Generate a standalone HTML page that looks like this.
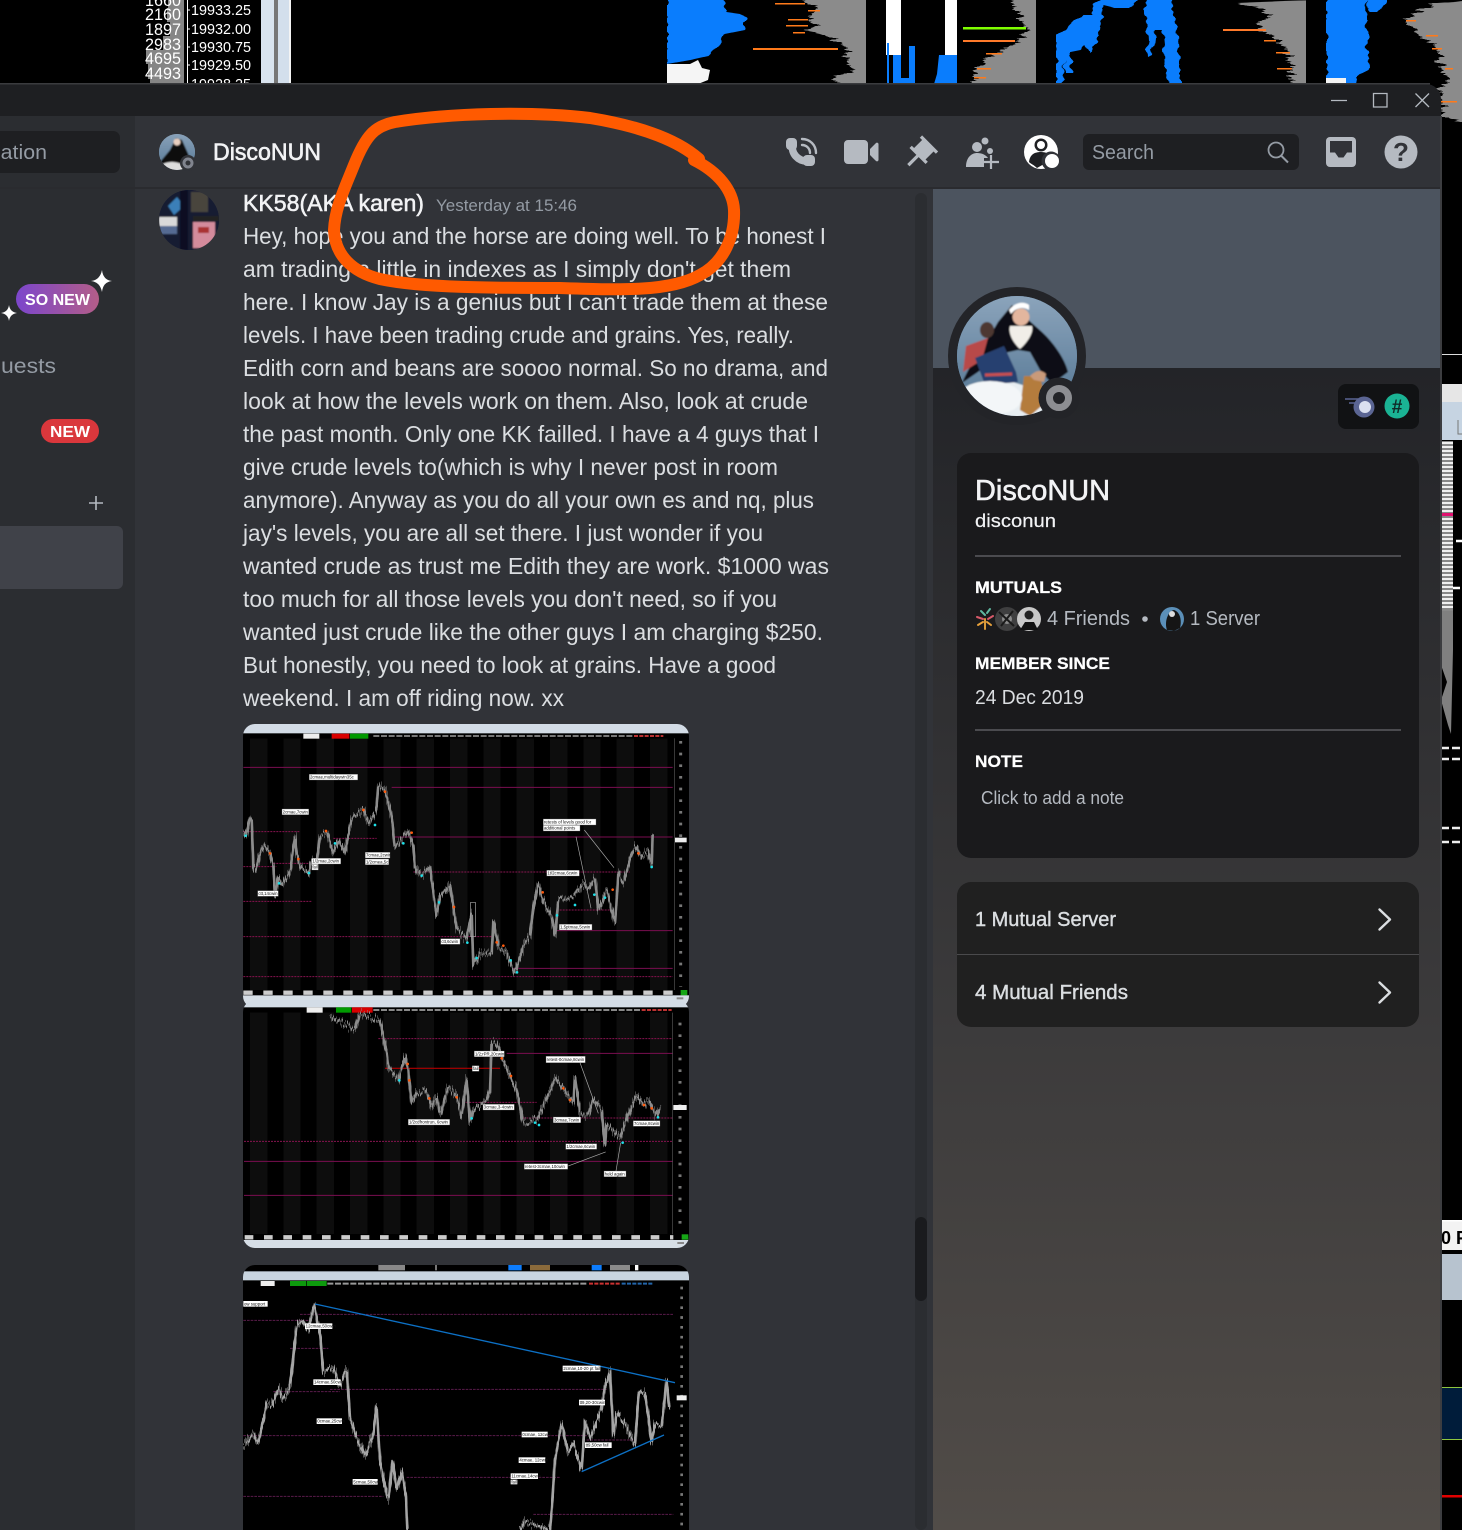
<!DOCTYPE html>
<html><head><meta charset="utf-8"><title>DiscoNUN</title>
<style>
html,body{margin:0;padding:0;background:#000;width:1462px;height:1530px;overflow:hidden}
svg{display:block}
text{font-family:"Liberation Sans",sans-serif}
.msg{font-size:23px;fill:#dbdee1}
.lb{font-size:13px;fill:#111}
.lr{fill:#fff}
.pr{fill:none;stroke:#8c8c8c;stroke-width:8;stroke-linejoin:bevel}
.hd{font-size:16.5px;font-weight:bold;fill:#fff;stroke:#fff;stroke-width:.25}
</style></head><body>
<svg xmlns="http://www.w3.org/2000/svg" width="1462" height="1530" viewBox="0 0 1462 1530">
<defs>
<linearGradient id="pg" x1="0" y1="368" x2="0" y2="1530" gradientUnits="userSpaceOnUse"><stop offset="0" stop-color="#232428"/><stop offset=".55" stop-color="#3b3a3b"/><stop offset="1" stop-color="#514c48"/></linearGradient>
<linearGradient id="sn" x1="0" x2="1" y1="0" y2="0"><stop offset="0" stop-color="#7c46cc"/><stop offset="1" stop-color="#b35d88"/></linearGradient>
<linearGradient id="sea" x1="0" x2="0" y1="0" y2="1"><stop offset="0" stop-color="#8ea6bd"/><stop offset="1" stop-color="#4f7290"/></linearGradient>
<clipPath id="c1"><circle cx="1017" cy="356" r="60"/></clipPath>
<clipPath id="c2"><circle cx="177" cy="152" r="18"/></clipPath>
<clipPath id="c3"><circle cx="189" cy="220" r="30"/></clipPath>
<clipPath id="ch1"><rect x="243" y="724" width="446" height="284" rx="12"/></clipPath>
<clipPath id="ch2"><rect x="243" y="1000" width="446" height="248" rx="12"/></clipPath>
<clipPath id="ch3"><rect x="243" y="1265" width="446" height="300" rx="12"/></clipPath>
<pattern id="bands" width="100" height="10" patternUnits="userSpaceOnUse"><rect width="100" height="10" fill="#000"/><rect x="30" width="52" height="10" fill="#0f0f0f"/></pattern>
<filter id="b" x="-2%" y="-2%" width="104%" height="104%"><feGaussianBlur stdDeviation=".8"/></filter>
<filter id="b2" x="-5%" y="-5%" width="110%" height="110%"><feGaussianBlur stdDeviation=".7"/></filter>
<filter id="j" filterUnits="userSpaceOnUse" x="0" y="0" width="1462" height="130" color-interpolation-filters="sRGB"><feTurbulence type="fractalNoise" baseFrequency=".01 .45" numOctaves="2" seed="4" result="n"/><feColorMatrix in="n" type="matrix" values="2 0 0 0 -.5  0 0 0 0 .5  0 0 0 0 .5  0 0 0 0 1" result="m"/><feDisplacementMap in="SourceGraphic" in2="m" scale="12" xChannelSelector="R" yChannelSelector="G"/></filter>
<filter id="j2" filterUnits="userSpaceOnUse" x="0" y="0" width="1462" height="130" color-interpolation-filters="sRGB"><feTurbulence type="fractalNoise" baseFrequency=".01 .2" numOctaves="1" seed="9" result="n"/><feColorMatrix in="n" type="matrix" values="2 0 0 0 -.5  0 0 0 0 .5  0 0 0 0 .5  0 0 0 0 1" result="m"/><feDisplacementMap in="SourceGraphic" in2="m" scale="5" xChannelSelector="R" yChannelSelector="G"/></filter>
<filter id="p" x="-3%" y="-8%" width="106%" height="116%" color-interpolation-filters="sRGB"><feTurbulence type="fractalNoise" baseFrequency=".35 .01" numOctaves="2" seed="7" result="n"/><feColorMatrix in="n" type="matrix" values="0 0 0 0 .5  0 2 0 0 -.5  0 0 0 0 .5  0 0 0 0 1" result="m"/><feDisplacementMap in="SourceGraphic" in2="m" scale="26" xChannelSelector="R" yChannelSelector="G"/></filter>
</defs>

<!-- background trading chart -->
<rect width="1462" height="1530" fill="#000"/>
<g fill="#858585"><rect x="168" y="0" width="16" height="8"/><rect x="167" y="8" width="17" height="14"/><rect x="170" y="22" width="14" height="14"/><rect x="163" y="36" width="21" height="14"/><rect x="146" y="50" width="38" height="14"/><rect x="148" y="64" width="36" height="15"/><rect x="150" y="79" width="34" height="6"/></g>
<rect x="187" y="0" width="1" height="84" fill="#fff"/>
<g stroke="#fff"><path d="M187 10h3M187 29h3M187 47h3M187 65h3"/></g>
<g font-size="17"><text x="145" y="20" textLength="36" lengthAdjust="spacingAndGlyphs" class="lr">2160</text><text x="145" y="35" textLength="36" lengthAdjust="spacingAndGlyphs" class="lr">1897</text><text x="145" y="50" textLength="36" lengthAdjust="spacingAndGlyphs" class="lr">2983</text><text x="145" y="64" textLength="36" lengthAdjust="spacingAndGlyphs" class="lr">4695</text><text x="145" y="79" textLength="36" lengthAdjust="spacingAndGlyphs" class="lr">4493</text><text x="145" y="6" textLength="36" lengthAdjust="spacingAndGlyphs" class="lr">1660</text></g>
<g font-size="15"><text x="191" y="15" textLength="60" lengthAdjust="spacingAndGlyphs" class="lr">19933.25</text><text x="191" y="34" textLength="60" lengthAdjust="spacingAndGlyphs" class="lr">19932.00</text><text x="191" y="52" textLength="60" lengthAdjust="spacingAndGlyphs" class="lr">19930.75</text><text x="191" y="70" textLength="60" lengthAdjust="spacingAndGlyphs" class="lr">19929.50</text><text x="191" y="89" textLength="60" lengthAdjust="spacingAndGlyphs" class="lr">19928.25</text></g>
<rect x="261" y="0" width="13" height="84" fill="#d9e4ef"/><rect x="274" y="0" width="4" height="84" fill="#777"/><rect x="278" y="0" width="11" height="84" fill="#d3dfec"/><rect x="289" y="0" width="2" height="84" fill="#f4f4f4"/>

<g filter="url(#j)">
<polygon fill="#8b8b8b" points="800,0 876,0 876,84 838,84 832,78 846,74 852,68 846,60 850,50 838,42 828,35 805,30 815,26 810,18 818,8"/>
<polygon fill="#8b8b8b" points="1010,0 1046,0 1046,84 970,84 975,74 983,60 1005,48 1018,42 1027,30 1021,24 1016,10"/>
<polygon fill="#8b8b8b" points="1233,3 1316,0 1316,84 1291,84 1291,70 1288,50 1268,33 1256,27 1270,15 1260,8"/>
<polygon fill="#8b8b8b" points="1436,3 1480,0 1480,125 1445,118 1441,84 1445,84 1438,50 1415,30 1405,20 1417,12"/>
</g>
<g filter="url(#j2)">
<polygon fill="#0a7dfd" points="667,0 724,0 726,12 740,14 745,18 745,30 725,34 718,46 708,56 690,60 667,64"/>
<polygon fill="#0a7dfd" points="1056,84 1056,36 1065,30 1075,20 1082,15 1092,15 1093,4 1101,0 1136,0 1130,8 1115,8 1103,5 1100,30 1095,45 1090,53 1085,45 1080,50 1070,52 1072,73 1065,73 1064,60 1063,84"/>
<polygon fill="#0a7dfd" points="1145,0 1171,0 1175,20 1180,60 1180,84 1168,84 1165,60 1162,30 1155,30 1152,55 1148,57 1146,25"/>
<polygon fill="#0a7dfd" points="1326,0 1386,0 1386,4 1378,12 1370,12 1366,0 1368,70 1358,74 1356,84 1326,84"/>
</g>
<rect x="640" y="0" width="27" height="84" fill="#000"/><rect x="866" y="0" width="20" height="84" fill="#000"/><rect x="1036" y="0" width="20" height="84" fill="#000"/><rect x="1306" y="0" width="20" height="84" fill="#000"/>
<polygon fill="#f5f5f5" points="667,64 690,64 698,60 702,68 710,70 708,80 698,84 667,84"/>
<g fill="#ff7a1a"><rect x="775" y="3" width="30" height="1.500"/><rect x="808" y="10" width="12" height="1.500"/><rect x="788" y="19" width="20" height="1.500"/><rect x="786" y="25" width="22" height="1.500"/><rect x="793" y="32" width="12" height="1.500"/><rect x="753" y="48" width="85" height="2"/></g>
<rect x="886" y="0" width="15" height="55" fill="#fff"/><rect x="887" y="43" width="2" height="41" fill="#0a7dfd"/><polygon fill="#0a7dfd" points="893,55 901,55 901,78 909,78 909,46 915,46 915,84 893,84"/>
<rect x="945" y="0" width="12" height="55" fill="#fff"/><polygon fill="#0a7dfd" points="939,55 957,55 957,84 934,84 937,74"/>
<rect x="963" y="27" width="63" height="2.500" fill="#7fff00"/><rect x="963" y="40" width="52" height="2" fill="#ff7a2a"/><g fill="#ff7a1a"><rect x="986" y="53" width="16" height="1.500"/><rect x="977" y="68" width="14" height="1.500"/><rect x="974" y="77" width="12" height="1.500"/></g>
<rect x="1223" y="29" width="43" height="2" fill="#ff7a2a"/><g fill="#ff7a1a"><rect x="1264" y="40" width="12" height="1.500"/><rect x="1276" y="52" width="14" height="1.500"/><rect x="1277" y="68" width="15" height="1.500"/></g>
<rect x="1326" y="78" width="20" height="6" fill="#f4f4f4"/>
<g fill="#ff7a1a"><rect x="1406" y="20" width="10" height="1.500"/><rect x="1426" y="35" width="12" height="1.500"/><rect x="1432" y="48" width="10" height="1.500"/><rect x="1445" y="68" width="8" height="1.500"/><rect x="1441" y="101" width="16" height="1.500"/></g>
<!-- right strip -->
<rect x="1441" y="354" width="21" height="1" fill="#ddd"/>
<rect x="1441" y="384" width="21" height="18" fill="#e6e6e6"/><rect x="1441" y="402" width="21" height="38" fill="#c6d4e2"/><path d="M1458 420v14h6" stroke="#777" fill="none"/>
<rect x="1441" y="441" width="12" height="170" fill="#888"/>
<path d="M1441 443H1453M1441 447H1453M1441 451H1453M1441 455H1453M1441 459H1453M1441 463H1453M1441 467H1453M1441 471H1453M1441 475H1453M1441 479H1453M1441 483H1453M1441 487H1453M1441 491H1453M1441 495H1453M1441 499H1453M1441 503H1453M1441 507H1453M1441 511H1453M1441 519H1453M1441 523H1453M1441 527H1453M1441 531H1453M1441 535H1453M1441 539H1453M1441 543H1453M1441 547H1453M1441 551H1453M1441 555H1453M1441 559H1453M1441 563H1453M1441 567H1453M1441 571H1453M1441 575H1453M1441 579H1453M1441 583H1453M1441 587H1453M1441 591H1453M1441 595H1453M1441 599H1453M1441 603H1453M1441 607H1453" stroke="#f0f0f0" stroke-width="2"/>
<rect x="1441" y="513" width="12" height="3" fill="#e0106f"/>
<polygon fill="#808080" points="1441,611 1453,611 1453,650 1451,734 1448,725 1441,700 1447,682 1441,665 1441,650"/>
<path d="M1456 541H1462M1453 588H1460" stroke="#fff" stroke-width="2.500"/>
<path d="M1441 748H1462M1441 759H1462M1441 828H1462M1441 842H1462" stroke="#eee" stroke-width="2.500" stroke-dasharray="8 3"/>
<rect x="1441" y="1220" width="21" height="30" fill="#f3f3f3"/><rect x="1441" y="1220" width="21" height="1.500" fill="#fff"/>
<text x="1441" y="1244" font-size="18" font-weight="bold" fill="#000">0 F</text>
<rect x="1441" y="1254" width="21" height="46" fill="#b7c3cf"/>
<rect x="1441" y="1387" width="21" height="53" fill="#001c3a"/><path d="M1441 1387.500H1462M1441 1439.500H1462" stroke="#8ec63f"/>
<rect x="1441" y="1495" width="21" height="2.500" fill="#e00000"/>

<!-- app window -->
<path d="M0 84H1426a15 15 0 0 1 15 15V1530H0Z" fill="#1e1f22"/>
<rect x="1440" y="116" width="2" height="1414" fill="#3c3d40"/>
<rect x="0" y="83" width="1430" height="1.500" fill="#3a3b3e"/>
<path d="M1331 100.500H1347M1373.500 93.500H1387V107H1373.500ZM1415.500 93.500L1429 107M1429 93.500L1415.500 107" stroke="#b5bac1" stroke-width="1.300" fill="none"/>
<rect x="0" y="116" width="135" height="1414" fill="#2b2d31"/>
<rect x="135" y="116" width="1305" height="1414" fill="#313338"/>
<rect x="0" y="187" width="1440" height="2" fill="#2a2b2f"/>
<rect x="-10" y="131" width="130" height="42" rx="7" fill="#1e1f22"/>
<text x="47" y="159" text-anchor="end" font-size="20" fill="#949ba4" textLength="57" lengthAdjust="spacingAndGlyphs">sation</text>

<!-- sidebar -->
<rect x="16" y="284" width="83" height="30" rx="15" fill="url(#sn)"/>
<text x="25" y="305" font-size="16" font-weight="bold" fill="#fff" textLength="65" lengthAdjust="spacingAndGlyphs">SO NEW</text>
<path d="M102 270Q103 280 112 281Q103 282 102 292Q100 282 91 281Q100 280 102 270Z" fill="#fff"/>
<path d="M9 305Q10 312 17 313Q10 314 9 321Q8 314 1 313Q8 312 9 305Z" fill="#fff"/>
<text x="1" y="373" font-size="21" fill="#949ba4" textLength="55" lengthAdjust="spacingAndGlyphs">uests</text>
<rect x="41" y="419" width="58" height="24" rx="12" fill="#da373c"/>
<text x="50" y="437" font-size="16" font-weight="bold" fill="#fff" textLength="40" lengthAdjust="spacingAndGlyphs">NEW</text>
<path d="M96 496V510M89 503H103" stroke="#b5bac1" stroke-width="1.600"/>
<rect x="-8" y="526" width="131" height="63" rx="6" fill="#404249"/>

<!-- header -->
<circle cx="177" cy="152" r="18" fill="#8ea6bd"/>
<g clip-path="url(#c2)"><g filter="url(#b2)"><rect x="155" y="130" width="44" height="44" fill="url(#sea)"/><polygon points="160,162 170,150 176,138 182,140 190,158 186,170 165,170" fill="#111"/><circle cx="177" cy="142" r="3.500" fill="#e8cfc0"/><ellipse cx="172" cy="168" rx="12" ry="6" fill="#ddd"/></g></g>
<circle cx="188" cy="163" r="8" fill="#313338"/><circle cx="188" cy="163" r="4" fill="none" stroke="#80848e" stroke-width="3"/>
<text x="213" y="160" font-size="24" fill="#f2f3f5" stroke="#f2f3f5" stroke-width=".6" textLength="108" lengthAdjust="spacingAndGlyphs">DiscoNUN</text>

<!-- header icons -->
<g fill="#b5bac1">
<path d="M793 143C790 153 798 162 809 161" fill="none" stroke="#b5bac1" stroke-width="7.500" stroke-linecap="round"/>
<rect x="786" y="138" width="11" height="12" rx="4"/><rect x="803" y="155" width="12" height="11" rx="4"/>
<path d="M802 139C810 139 816 145 816 153M802 145C806 145 810 148 810 153" fill="none" stroke="#b5bac1" stroke-width="2.400" stroke-linecap="round"/>
<path d="M848 140H864a4 4 0 0 1 4 4V160a4 4 0 0 1-4 4H848a4 4 0 0 1-4-4V144a4 4 0 0 1 4-4ZM870 149L876 143a1.500 1.500 0 0 1 2.500 1V160a1.500 1.500 0 0 1-2.500 1L870 155Z"/>
<path transform="translate(902.500 132) scale(1.620)" d="M22 12L12.101 2.101L10.686 3.514L12.101 4.929L7.151 9.878V9.88L5.736 8.465L4.322 9.88L8.565 14.122L2.908 19.778L4.322 21.192L9.979 15.536L14.222 19.778L15.636 18.364L14.222 16.95L19.171 12H19.172L20.586 13.414Z"/>
<circle cx="977" cy="147" r="5"/><circle cx="985" cy="141" r="3.500"/><path d="M966 167C966 157 972 153 977 153C982 153 986 155 988 158L984 158V167Z"/><circle cx="990" cy="151" r="3"/>
<path d="M991 155V169M984 162H999" stroke="#b5bac1" stroke-width="2.200"/>
</g>
<circle cx="1041" cy="152" r="17" fill="#fff"/>
<circle cx="1041" cy="145" r="6.500" fill="#1e1f22"/><circle cx="1041" cy="145" r="4" fill="#fff"/>
<path d="M1029 162C1030 154 1035 152 1041 152C1046 152 1050 154 1050 157L1044 164L1037 168C1034 165 1031 164 1029 162Z" fill="#1e1f22"/>
<circle cx="1051" cy="161" r="9.500" fill="#313338"/><circle cx="1052" cy="161" r="7" fill="#fff"/>
<rect x="1083" y="134" width="216" height="36" rx="6" fill="#1e1f22"/>
<text x="1092" y="159" font-size="20" fill="#949ba4" textLength="62" lengthAdjust="spacingAndGlyphs">Search</text>
<circle cx="1276" cy="150" r="7.500" fill="none" stroke="#949ba4" stroke-width="1.800"/><path d="M1281.500 156L1288 162.500" stroke="#949ba4" stroke-width="2"/>
<rect x="1326" y="137" width="30" height="30" rx="4" fill="#b5bac1"/>
<path d="M1330 141V152.500H1335L1338.500 157.500H1343.500L1347 152.500H1352V141Z" fill="#313338"/>
<circle cx="1401" cy="152" r="16.500" fill="#b5bac1"/>
<text x="1401" y="161" text-anchor="middle" font-size="26" font-weight="bold" fill="#313338">?</text>

<!-- chat -->
<rect x="915" y="193" width="12" height="1337" rx="6" fill="#2b2d31"/>
<rect x="915" y="1217" width="12" height="84" rx="6" fill="#1a1b1e"/>
<circle cx="189" cy="220" r="30" fill="#141a34"/>
<g clip-path="url(#c3)"><g filter="url(#b2)">
<rect x="155" y="186" width="68" height="68" fill="#161b33"/>
<polygon points="168,206 177,197 184,206 174,215" fill="#3b7fb8"/>
<rect x="191" y="192" width="17" height="20" fill="#4a453c"/><rect x="159" y="217" width="18" height="9" fill="#d9d9d9"/><rect x="160" y="226" width="17" height="8" fill="#546a92"/>
<rect x="193" y="222" width="22" height="26" fill="#d48b9c"/><rect x="198" y="227" width="11" height="6" fill="#a33"/>
<rect x="180" y="190" width="8" height="60" fill="#0c0e20"/><rect x="193" y="216" width="26" height="5" fill="#222"/>
</g></g>
<text x="243" y="211" font-size="23" fill="#f2f3f5" stroke="#f2f3f5" stroke-width=".55" textLength="181" lengthAdjust="spacingAndGlyphs">KK58(AKA karen)</text>
<text x="436" y="211" font-size="17" fill="#949ba4" textLength="141" lengthAdjust="spacingAndGlyphs">Yesterday at 15:46</text>
<text class="msg" x="243" y="244" textLength="583" lengthAdjust="spacingAndGlyphs">Hey, hope you and the horse are doing well. To be honest I</text>
<text class="msg" x="243" y="277" textLength="548" lengthAdjust="spacingAndGlyphs">am trading a little in indexes as I simply don't get them</text>
<text class="msg" x="243" y="310" textLength="585" lengthAdjust="spacingAndGlyphs">here. I know Jay is a genius but I can't trade them at these</text>
<text class="msg" x="243" y="343" textLength="551" lengthAdjust="spacingAndGlyphs">levels. I have been trading crude and grains. Yes, really.</text>
<text class="msg" x="243" y="376" textLength="585" lengthAdjust="spacingAndGlyphs">Edith corn and beans are soooo normal. So no drama, and</text>
<text class="msg" x="243" y="409" textLength="565" lengthAdjust="spacingAndGlyphs">look at how the levels work on them. Also, look at crude</text>
<text class="msg" x="243" y="442" textLength="576" lengthAdjust="spacingAndGlyphs">the past month. Only one KK failled. I have a 4 guys that I</text>
<text class="msg" x="243" y="475" textLength="535" lengthAdjust="spacingAndGlyphs">give crude levels to(which is why I never post in room</text>
<text class="msg" x="243" y="508" textLength="571" lengthAdjust="spacingAndGlyphs">anymore). Anyway as you do all your own es and nq, plus</text>
<text class="msg" x="243" y="541" textLength="520" lengthAdjust="spacingAndGlyphs">jay's levels, you are all set there. I just wonder if you</text>
<text class="msg" x="243" y="574" textLength="586" lengthAdjust="spacingAndGlyphs">wanted crude as trust me Edith they are work. $1000 was</text>
<text class="msg" x="243" y="607" textLength="534" lengthAdjust="spacingAndGlyphs">too much for all those levels you don't need, so if you</text>
<text class="msg" x="243" y="640" textLength="580" lengthAdjust="spacingAndGlyphs">wanted just crude like the other guys I am charging $250.</text>
<text class="msg" x="243" y="673" textLength="533" lengthAdjust="spacingAndGlyphs">But honestly, you need to look at grains. Have a good</text>
<text class="msg" x="243" y="706" textLength="321" lengthAdjust="spacingAndGlyphs">weekend. I am off riding now. xx</text>

<!-- chart 1 -->
<g clip-path="url(#ch1)"><g transform="translate(240 720) scale(.33333)"><g filter="url(#b)">
<rect x="0" y="0" width="1380" height="870" fill="#000"/>
<rect x="10" y="55" width="1288" height="755" fill="url(#bands)"/>
<rect x="0" y="10" width="1380" height="30" fill="#d3dce6"/>
<rect x="190" y="41" width="48" height="15" fill="#eee"/><rect x="275" y="41" width="53" height="15" fill="#d90000"/><rect x="330" y="41" width="55" height="15" fill="#009a00"/>
<path d="M400 48H1180" stroke="#777" stroke-width="6" stroke-dasharray="18 5"/><path d="M1182 48H1270" stroke="#b33" stroke-width="6" stroke-dasharray="12 4"/>
<g stroke="#7a1050" stroke-width="3" fill="none"><path d="M10 142H1300M455 202H1300M460 351H1300M950 632H1300M820 745H1300" /></g>
<path d="M10 770H1300M10 650H760M10 544H215M10 440H110M100 430H215M10 335H180M280 355H410M520 456H1170M950 570H1110" stroke="#86124f" stroke-width="3" stroke-dasharray="6 3" fill="none"/>
<polyline class="pr" filter="url(#p)" points="10,330 20,350 28,295 35,300 40,440 48,450 60,400 75,375 90,400 100,440 105,530 115,470 125,495 150,460 165,345 170,400 180,440 205,460 215,420 230,430 240,345 260,340 280,400 295,360 315,400 335,295 370,270 385,310 405,280 410,265 415,195 435,210 455,290 465,380 480,365 505,335 520,380 525,440 545,470 570,440 590,590 600,530 630,495 640,560 650,625 680,660 695,580 700,740 720,700 755,700 760,600 775,680 800,700 825,760 850,680 870,650 880,560 895,490 905,530 935,590 945,650 955,540 1000,530 1030,490 1045,510 1065,470 1075,570 1100,510 1125,610 1135,460 1150,490 1175,400 1190,375 1200,410 1225,395 1235,440 1238,345"/>
<g fill="#1fe0e8"><circle cx="17" cy="347" r="4"/><circle cx="117" cy="490" r="4"/><circle cx="207" cy="459" r="4"/><circle cx="285" cy="370" r="4"/><circle cx="405" cy="315" r="4"/><circle cx="490" cy="370" r="4"/><circle cx="545" cy="467" r="4"/><circle cx="597" cy="547" r="4"/><circle cx="682" cy="668" r="4"/><circle cx="710" cy="714" r="4"/><circle cx="812" cy="721" r="4"/><circle cx="831" cy="757" r="4"/><circle cx="951" cy="586" r="4"/><circle cx="1005" cy="555" r="4"/><circle cx="1063" cy="524" r="4"/><circle cx="1095" cy="533" r="4"/><circle cx="1235" cy="441" r="4"/></g>
<g fill="#ff5a0a"><circle cx="90" cy="400" r="4"/><circle cx="175" cy="417" r="4"/><circle cx="258" cy="333" r="4"/><circle cx="370" cy="270" r="4"/><circle cx="435" cy="215" r="4"/><circle cx="515" cy="338" r="4"/><circle cx="642" cy="561" r="4"/><circle cx="770" cy="667" r="4"/><circle cx="790" cy="677" r="4"/><circle cx="908" cy="517" r="4"/><circle cx="1118" cy="509" r="4"/><circle cx="1195" cy="400" r="4"/></g>
<path d="M1008 350L1053 565M1033 330L1122 443M692 547V650H706V547Z" stroke="#aaa" stroke-width="2" fill="none"/>
<g fill="#fff" stroke="#666"><rect x="208" y="163" width="145" height="17"/><rect x="126" y="267" width="80" height="17"/><rect x="910" y="297" width="158" height="18"/><rect x="910" y="316" width="110" height="17"/><rect x="376" y="397" width="74" height="17"/><rect x="376" y="417" width="70" height="17"/><rect x="215" y="415" width="87" height="17"/><rect x="215" y="433" width="20" height="17"/><rect x="53" y="512" width="62" height="17"/><rect x="920" y="451" width="98" height="17"/><rect x="958" y="613" width="98" height="17"/><rect x="602" y="656" width="58" height="17"/></g>
<g><text x="210" y="176" class="lb">2cmae,multidaywin35c</text><text x="128" y="280" class="lb">2cmae,7cwin</text><text x="912" y="310" class="lb">retests of levels good for</text><text x="912" y="329" class="lb">additional points</text><text x="378" y="410" class="lb">7cmae,2cwin</text><text x="378" y="430" class="lb">1/2cmea,5c</text><text x="217" y="428" class="lb">1/2mae,2cwin</text><text x="217" y="446" class="lb">fail</text><text x="55" y="525" class="lb">ctt,14cwin</text><text x="922" y="464" class="lb">1t/2cmae,6cwin</text><text x="960" y="626" class="lb">1,5ptmae,5cwin</text><text x="604" y="669" class="lb">ctt,6cwin</text></g>
<rect x="1298" y="55" width="42" height="755" fill="#000"/><path d="M1304 55V810" stroke="#555" stroke-width="2"/>
<path d="M1322 63V800" stroke="#777" stroke-width="9" stroke-dasharray="8 27"/>
<rect x="1305" y="353" width="35" height="14" fill="#eee"/>
<rect x="10" y="810" width="1288" height="16" fill="#000"/><path d="M10 818H1300" stroke="#ccc" stroke-width="13" stroke-dasharray="28 32"/>
<rect x="1322" y="810" width="20" height="16" fill="#19a619"/>
<rect x="0" y="826" width="1380" height="34" fill="#d6dee6"/><rect x="1310" y="832" width="20" height="6" fill="#888"/>
</g></g></g>

<!-- chart 2 -->
<g clip-path="url(#ch2)"><g transform="translate(240 1000) scale(.33333)"><g filter="url(#b)">
<rect x="0" y="0" width="1380" height="780" fill="#000"/>
<rect x="12" y="38" width="1286" height="665" fill="url(#bands)"/>
<rect x="0" y="0" width="1380" height="22" fill="#d3dce6"/>
<rect x="200" y="22" width="48" height="16" fill="#eee"/><rect x="288" y="22" width="46" height="16" fill="#009a00"/><rect x="336" y="22" width="62" height="16" fill="#d90000"/>
<path d="M400 30H1200" stroke="#888" stroke-width="6" stroke-dasharray="18 5"/><path d="M1205 30H1295" stroke="#b33" stroke-width="6" stroke-dasharray="12 4"/>
<path d="M800 160H1298M12 484H1298M12 586H1298" stroke="#7a1050" stroke-width="3"/>
<path d="M435 205H780" stroke="#b00000" stroke-width="3.500"/>
<path d="M415 116H1298M670 307H890M850 354H1298M12 424H1298" stroke="#86124f" stroke-width="3" stroke-dasharray="6 3"/>
<polyline class="pr" filter="url(#p)" points="270,50 345,90 360,40 420,60 440,160 445,200 475,240 495,170 505,210 515,310 530,280 560,275 575,320 590,290 600,345 625,260 650,290 665,345 680,235 690,370 700,330 740,300 750,270 755,125 770,130 790,180 810,230 830,270 850,370 890,360 920,295 945,230 970,265 1000,310 1005,230 1020,340 1045,350 1060,295 1085,330 1095,440 1100,370 1140,415 1170,330 1190,285 1210,315 1225,300 1250,350 1260,320"/>
<g fill="#1fe0e8"><circle cx="478" cy="241" r="4"/><circle cx="695" cy="355" r="4"/><circle cx="885" cy="368" r="4"/><circle cx="897" cy="375" r="4"/><circle cx="1148" cy="428" r="4"/><circle cx="1254" cy="352" r="4"/></g>
<g fill="#ff5a0a"><circle cx="503" cy="192" r="4"/><circle cx="508" cy="241" r="4"/><circle cx="568" cy="295" r="4"/><circle cx="650" cy="292" r="4"/><circle cx="785" cy="175" r="4"/><circle cx="813" cy="228" r="4"/><circle cx="970" cy="265" r="4"/><circle cx="990" cy="300" r="4"/><circle cx="1212" cy="315" r="4"/><circle cx="1235" cy="325" r="4"/></g>
<path d="M1020 188L1075 340M985 498L1097 456M1128 513L1142 428" stroke="#aaa" stroke-width="2" fill="none"/>
<g fill="#fff" stroke="#666"><rect x="703" y="153" width="90" height="17"/><rect x="918" y="169" width="118" height="19"/><rect x="697" y="197" width="20" height="17"/><rect x="505" y="358" width="124" height="17"/><rect x="729" y="313" width="94" height="17"/><rect x="940" y="351" width="82" height="17"/><rect x="1180" y="362" width="80" height="17"/><rect x="977" y="431" width="93" height="17"/><rect x="853" y="491" width="130" height="17"/><rect x="1092" y="513" width="66" height="17"/></g>
<g><text x="705" y="166" class="lb">1/2;rPR,20cwin</text><text x="920" y="183" class="lb">retest-0cmae,8cwin</text><text x="699" y="210" class="lb">fail</text><text x="507" y="371" class="lb">1/2cdfrontrun, 6cwin</text><text x="731" y="326" class="lb">3cmae,3-4cwin</text><text x="942" y="364" class="lb">3cmae,7cwin</text><text x="1182" y="375" class="lb">7cmae,8cwin</text><text x="979" y="444" class="lb">1/2cmae,6cwin</text><text x="855" y="504" class="lb">retest-3cmae,10cwin</text><text x="1094" y="526" class="lb">held again</text></g>
<rect x="1298" y="38" width="42" height="665" fill="#000"/><path d="M1298 38V703" stroke="#555" stroke-width="2"/>
<path d="M1320 68V680" stroke="#777" stroke-width="9" stroke-dasharray="8 27"/>
<rect x="1300" y="315" width="40" height="15" fill="#eee"/>
<rect x="12" y="703" width="1286" height="17" fill="#000"/><path d="M14 712H1300" stroke="#ccc" stroke-width="13" stroke-dasharray="26 32"/>
<rect x="1325" y="703" width="20" height="16" fill="#19a619"/>
<rect x="0" y="720" width="1380" height="30" fill="#d6dee6"/><rect x="1312" y="726" width="20" height="6" fill="#888"/>
</g></g></g>

<!-- chart 3 -->
<g clip-path="url(#ch3)"><g transform="translate(240 1260) scale(.33333)"><g filter="url(#b)">
<rect x="0" y="15" width="1380" height="800" fill="#000"/>
<rect x="415" y="15" width="80" height="16" fill="#888"/><rect x="585" y="15" width="6" height="16" fill="#777"/><rect x="805" y="15" width="40" height="16" fill="#0a7dfd"/><rect x="870" y="15" width="60" height="16" fill="#8a6a3a"/><rect x="1055" y="15" width="30" height="16" fill="#0a7dfd"/><rect x="1110" y="15" width="60" height="16" fill="#8a8a8a"/><rect x="1185" y="15" width="10" height="16" fill="#fff"/>
<rect x="0" y="34" width="1380" height="27" fill="#c9d5e0"/>
<rect x="62" y="63" width="42" height="15" fill="#eee"/><rect x="150" y="63" width="48" height="15" fill="#0a9a0a"/><rect x="200" y="63" width="60" height="15" fill="#0a9a0a"/>
<path d="M262 71H1040" stroke="#999" stroke-width="6" stroke-dasharray="18 5"/><path d="M1047 71H1140" stroke="#c33" stroke-width="6" stroke-dasharray="12 4"/><path d="M1145 71H1240" stroke="#26a" stroke-width="6" stroke-dasharray="12 4"/>
<path d="M180 163H1300M10 181H215M150 265H265M100 395H300M270 388H1100M10 527H1040M1040 540H1190M500 652H960M10 709H430M880 763H1300" stroke="#5a1a4a" stroke-width="3" stroke-dasharray="8 3"/>
<polyline class="pr" filter="url(#p)" style="stroke:#a5a5a5" points="10,560 40,520 55,550 80,430 95,440 115,385 130,420 150,380 170,200 185,180 205,210 222,140 240,220 250,340 280,320 300,380 320,330 330,470 345,520 375,590 400,520 410,440 420,600 435,680 445,720 458,600 470,690 485,630 498,710 502,810"/>
<polyline class="pr" filter="url(#p)" style="stroke:#a5a5a5" points="840,810 855,785 930,810 935,750 945,600 965,490 985,580 1000,550 1025,630 1035,480 1050,540 1085,440 1095,380 1110,330 1120,530 1130,460 1160,500 1185,555 1197,395 1215,400 1235,545 1245,490 1265,500 1280,360 1288,450"/>
<path d="M225 132L1305 368M1025 635L1272 525" stroke="#0b6fc4" stroke-width="4"/>
<g fill="#fff"><rect x="10" y="123" width="73" height="17"/><rect x="195" y="190" width="82" height="17"/><rect x="220" y="358" width="82" height="17"/><rect x="230" y="475" width="76" height="17"/><rect x="338" y="657" width="75" height="17"/><rect x="845" y="515" width="78" height="17"/><rect x="836" y="592" width="80" height="17"/><rect x="812" y="640" width="82" height="17"/><rect x="812" y="659" width="20" height="14"/><rect x="1035" y="547" width="80" height="17"/><rect x="1017" y="419" width="78" height="17"/><rect x="968" y="317" width="113" height="17"/></g>
<g><text x="12" y="136" class="lb">ow support</text><text x="197" y="203" class="lb">12cmae,50cwin</text><text x="222" y="371" class="lb">14cmae,50cwin</text><text x="232" y="488" class="lb">0cmae,25cwin</text><text x="340" y="670" class="lb">5cmae,50cwin</text><text x="847" y="528" class="lb">0cmae, 12cwin</text><text x="838" y="605" class="lb">4cmae, 12cwin</text><text x="814" y="653" class="lb">11cmae,14cwin</text><text x="814" y="670" class="lb">fail</text><text x="1037" y="560" class="lb">tt9,50cw fail</text><text x="1019" y="432" class="lb">tt9,20-30cwin</text><text x="970" y="330" class="lb">2cmae,10-20 pt fail</text></g>
<rect x="1307" y="78" width="33" height="740" fill="#000"/>
<path d="M1325 80V815" stroke="#777" stroke-width="8" stroke-dasharray="8 21.500"/>
<rect x="1310" y="406" width="30" height="15" fill="#eee"/>
</g></g></g>

<!-- right profile panel -->
<rect x="933" y="189" width="507" height="1341" fill="url(#pg)"/>
<rect x="933" y="189" width="507" height="179" fill="#4c545f"/>
<circle cx="1017" cy="356" r="69" fill="#232428"/>
<circle cx="1017" cy="356" r="60" fill="#5f83a3"/>
<g clip-path="url(#c1)"><g filter="url(#b2)">
<rect x="950" y="290" width="134" height="130" fill="url(#sea)"/>
<polygon points="950,405 1000,378 1045,392 1080,416 950,425" fill="#e8eef2"/>
<path d="M962 383C972 360 985 345 998 322L1012 305L1024 316L1042 332C1056 345 1066 362 1068 372L1052 384L1040 370L1030 352L1018 350L1000 354L978 372Z" fill="#0d0d12"/>
<path d="M988 338L966 346L963 372L982 360Z" fill="#b84a4a"/><ellipse cx="987" cy="330" rx="7" ry="8" fill="#4d3830"/>
<path d="M975 358L1004 346L1016 372L1018 382L985 385Z" fill="#27416f"/>
<path d="M985 375L1012 374" stroke="#c75050" stroke-width="3"/>
<path d="M1010 326C1008 332 1012 342 1020 349C1028 342 1034 332 1032 326Z" fill="#f1eee8"/>
<ellipse cx="1021" cy="317" rx="8.500" ry="8.500" fill="#e3b69e"/>
<path d="M1009 310C1015 302 1024 301 1029 305L1029 310C1022 306 1016 308 1011 314Z" fill="#fff"/>
<path d="M1024 376L1040 376L1046 402L1030 416L1020 410Z" fill="#b47b3c"/>
<path d="M1030 376C1034 372 1040 368 1046 374L1044 382L1034 380Z" fill="#c99a7a"/>
<ellipse cx="990" cy="398" rx="32" ry="17" fill="#f3f6f8"/>
</g></g>
<circle cx="1059" cy="398" r="20.500" fill="#232428"/><circle cx="1059" cy="398" r="9.500" fill="none" stroke="#8d8e92" stroke-width="7"/>
<rect x="1338" y="384" width="81" height="45" rx="8" fill="#111214"/>
<path d="M1345 399H1358M1349 403H1358" stroke="#5b6593" stroke-width="1.500"/>
<circle cx="1364" cy="407" r="10.500" fill="#5b6593"/><circle cx="1365" cy="407" r="6" fill="#dbe0f0"/>
<circle cx="1397" cy="406" r="12.500" fill="#1ab394"/>
<text x="1397" y="413" text-anchor="middle" font-size="19" font-weight="bold" fill="#0f2a27">#</text>

<rect x="957" y="453" width="462" height="405" rx="14" fill="#1a1a1c"/>
<text x="975" y="500" font-size="29" fill="#f2f3f5" stroke="#f2f3f5" stroke-width=".6" textLength="135" lengthAdjust="spacingAndGlyphs">DiscoNUN</text>
<text x="975" y="527" font-size="18.500" fill="#f2f3f5" stroke="#f2f3f5" stroke-width=".2" textLength="81" lengthAdjust="spacingAndGlyphs">disconun</text>
<rect x="975" y="555" width="426" height="2" fill="#4b4b4f"/>
<text class="hd" x="975" y="593" textLength="87" lengthAdjust="spacingAndGlyphs">MUTUALS</text>
<g stroke-width="2" fill="none" stroke-linecap="round"><path d="M981 611L985 615M990 609L987 613" stroke="#5fb8a0"/><path d="M977 617L983 619M993 616L988 619" stroke="#d85a6a"/><path d="M978 625L983 622M991 625L987 622" stroke="#e9a23b"/><path d="M985 619V629" stroke="#d89a3a"/></g>
<circle cx="1007" cy="619" r="12" fill="#3f3f40"/><circle cx="1007" cy="619" r="5" fill="#8a8a8a"/><path d="M999 612L1014 626M1013 611L1001 626" stroke="#1a1a1a" stroke-width="2"/>
<circle cx="1029" cy="619" r="12" fill="#c8c8c8"/><circle cx="1029" cy="615" r="4.500" fill="#222"/><path d="M1020 630L1025 622H1034L1038 630Z" fill="#111"/>
<text x="1047" y="625" font-size="20" fill="#b5bac1" textLength="83" lengthAdjust="spacingAndGlyphs">4 Friends</text>
<circle cx="1145" cy="619" r="2.800" fill="#b5bac1"/>
<circle cx="1172" cy="619" r="12" fill="#5b8fb8"/><path d="M1167 630C1164 622 1168 611 1174 610C1180 612 1182 620 1180 628L1174 631Z" fill="#151515"/><circle cx="1172" cy="614" r="3" fill="#ddd"/>
<text x="1190" y="625" font-size="20" fill="#b5bac1" textLength="70" lengthAdjust="spacingAndGlyphs">1 Server</text>
<text class="hd" x="975" y="669" textLength="135" lengthAdjust="spacingAndGlyphs">MEMBER SINCE</text>
<text x="975" y="704" font-size="20" fill="#dbdee1" textLength="109" lengthAdjust="spacingAndGlyphs">24 Dec 2019</text>
<rect x="975" y="729" width="426" height="2" fill="#4b4b4f"/>
<text class="hd" x="975" y="767" textLength="48" lengthAdjust="spacingAndGlyphs">NOTE</text>
<text x="981" y="804" font-size="18" fill="#b5bac1" textLength="143" lengthAdjust="spacingAndGlyphs">Click to add a note</text>

<rect x="957" y="882" width="462" height="145" rx="14" fill="#202020"/>
<rect x="957" y="954" width="462" height="1" fill="#4a4a4c"/>
<text x="975" y="926" font-size="20" fill="#dbdee1" stroke="#dbdee1" stroke-width=".4" textLength="141" lengthAdjust="spacingAndGlyphs">1 Mutual Server</text>
<text x="975" y="999" font-size="20" fill="#dbdee1" stroke="#dbdee1" stroke-width=".4" textLength="153" lengthAdjust="spacingAndGlyphs">4 Mutual Friends</text>
<path d="M1379.500 909.500L1390 919.500L1379.500 929.500M1379.500 982.500L1390 992.500L1379.500 1002.500" stroke="#dbdee1" stroke-width="2.400" fill="none" stroke-linecap="round" stroke-linejoin="round"/>

<!-- orange freehand ring -->
<path d="M699 159C680 142 645 127 590 118C530 111 450 113 395 122C375 126 366 135 354 165C344 190 335 208 334 230C335 255 352 272 380 279C420 288 500 288 560 288C620 290 670 292 700 275C725 262 735 235 734 210C733 190 718 172 694 160" fill="none" stroke="#ff5a00" stroke-width="12" stroke-linecap="round" stroke-linejoin="round"/>
</svg>
</body></html>
